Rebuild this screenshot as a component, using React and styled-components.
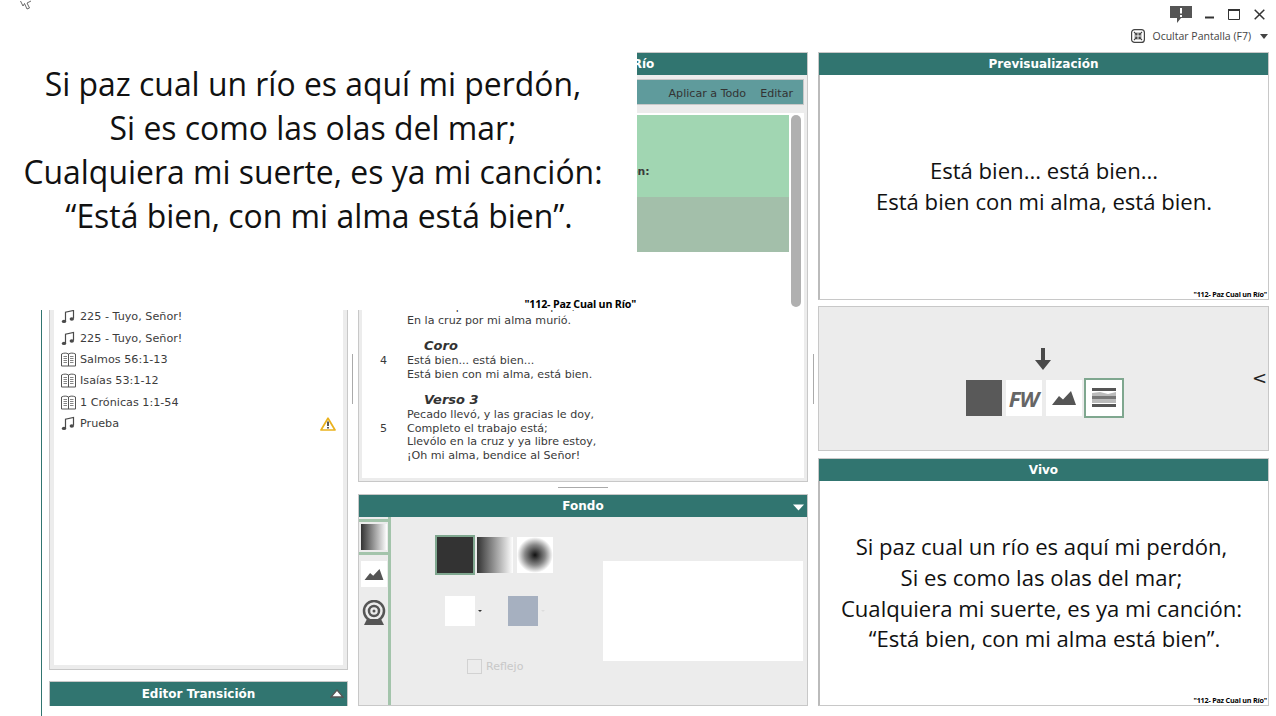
import React from 'react';
import styled, { createGlobalStyle } from 'styled-components';

const Global = createGlobalStyle`
  html, body { margin: 0; padding: 0; background: #fff; overflow: hidden; }
  * { box-sizing: border-box; }
`;
const Page = styled.div`
  position: relative; width: 1276px; height: 716px; overflow: hidden; background: #fff;
  display: flex; flex-direction: column; font-family: "DejaVu Sans", sans-serif; color: #333;
`;
const TopBar = styled.header`
  height: 52px; flex: none; display: flex; flex-direction: column; align-items: flex-end;
  padding: 6px 8px 0 0;
`;
const WindowRow = styled.div`display: flex; align-items: flex-start; height: 23px; margin-right: 3px;`;
const WindowBtn = styled.svg`display: block; margin-left: ${p => p.$gap}px; margin-top: ${p => p.$top || 0}px;`;
const ScreenRow = styled.div`display: flex; align-items: center; height: 14px;`;
const ScreenLabel = styled.span`
  font: 10.5px "Open Sans", sans-serif; color: #444; margin: 0 9px 0 7px; white-space: nowrap;
`;
const Caret = styled.span`
  width: 0; height: 0; border-left: 4.5px solid transparent; border-right: 4.5px solid transparent;
  border-top: 5px solid #444;
`;
const Main = styled.main`
  flex: 1; min-height: 0; margin-left: 41px; border-left: 1px solid #317570;
  display: flex; padding: 0 7px 10px 7px;
`;
const LeftCol = styled.section`width: 299px; flex: none; display: flex; flex-direction: column;`;
const PlayList = styled.div`
  flex: 1; border: 1px solid #c8c8c8; border-top: none; background: #fff;
  box-shadow: inset 0 0 0 4px #ececec; padding: 254px 11px 0 11px;
  margin-bottom: 11px;
`;
const Item = styled.div`
  height: 21.4px; display: flex; align-items: center; font-size: 11.2px; color: #3c3c3c; white-space: nowrap;
`;
const ItemIcon = styled.svg`flex: none; margin-right: 4px;`;
const ItemName = styled.span`flex: 1;`;
const Header = styled.div`
  position: relative; height: ${p => p.$h || 23}px; flex: none; background: #317570; color: #fff;
  display: flex; align-items: center; justify-content: center; border: 1px solid #c8c8c8; border-bottom: none;
  font-size: 12px; font-weight: 700; white-space: nowrap;
`;
const Triangle = styled.svg`position: absolute; right: ${p => p.$right}px; top: ${p => p.$top}px;`;
const Gutter = styled.div`
  width: 10px; flex: none; display: flex; align-items: flex-start; justify-content: center;
  padding: 302px ${p => p.$pr || 0}px 0 0;
`;
const GutterMark = styled.div`width: 1px; height: 50px; background: #aaa;`;
const MidCol = styled.section`width: 450px; flex: none; display: flex; flex-direction: column;`;
const SongPanel = styled.div`
  height: 407px; flex: none; display: flex; flex-direction: column; background: #ececec;
  border: 1px solid #c8c8c8; border-top: none;
`;
const Toolbar = styled.div`
  height: 26px; flex: none; margin: 4px 3px 0 3px; background: #5f9b9c; border: 1px solid #c8c8c8;
  display: flex; align-items: center; justify-content: flex-end; gap: 14px; padding: 2px 10px 0 0;
  font-size: 11.1px; color: #333;
`;
const VerseList = styled.div`
  height: 365px; margin: 8px 3px 0 3px; background: #fff; display: flex; overflow: hidden;
`;
const Verses = styled.div`width: 427px; flex: none; padding-top: 2px;`;
const Verse = styled.div`
  height: ${p => p.$h}px; background: ${p => p.$bg || 'transparent'}; padding-top: ${p => p.$pt || 4}px; overflow: hidden;
  font-size: ${p => p.$strong ? 10.9 : 11.1}px; line-height: 13.5px; color: #3a3a3a; font-weight: ${p => p.$strong ? 700 : 400};
`;
const VerseTitle = styled.div`
  height: 16px; line-height: 16px; padding-left: 62px; font-size: 13px; font-weight: 700; font-style: italic; color: #333;
`;
const VerseBody = styled.div`display: flex; align-items: center;`;
const VerseNum = styled.div`width: 45px; flex: none; padding: 0 0 13px 18px;`;
const ScrollTrack = styled.div`flex: 1; padding: 2px 2px 0 2px;`;
const ScrollThumb = styled.div`width: 10px; height: 192px; border-radius: 5px; background: #b0b0b0;`;
const SplitRow = styled.div`height: 12px; flex: none; display: flex; align-items: center; justify-content: center; padding-bottom: 2px;`;
const SplitMark = styled.div`width: 50px; height: 1px; background: #aaa;`;
const FondoPanel = styled.div`
  flex: 1; display: flex; background: #ececec; border: 1px solid #c8c8c8; border-top: none; min-height: 0;
`;
const Tabs = styled.div`
  width: 32px; flex: none; border-right: 3px solid #a3c4ab; display: flex; flex-direction: column; align-items: flex-start;
`;
const Tab = styled.div`
  width: 29px; height: ${p => p.$h}px; display: flex; align-items: center; justify-content: center;
  ${p => p.$active ? 'border-top: 3px solid #a3c4ab; border-bottom: 3px solid #a3c4ab; margin-top: 2px;' : ''}
`;
const TabThumb = styled.div`
  width: 26px; height: 26px; background: ${p => p.$bg || '#fff'}; display: flex; align-items: center; justify-content: center;
`;
const FondoLeft = styled.div`width: 212px; flex: none; display: flex; flex-direction: column; align-items: flex-start; padding: 18px 0 0 44px;`;
const Swatches = styled.div`display: flex; align-items: center; gap: 2px;`;
const Swatch = styled.div`
  width: ${p => p.$active ? 40 : 36}px; height: ${p => p.$active ? 40 : 36}px; background: ${p => p.$bg};
  ${p => p.$active ? 'border: 2px solid #7fa78f;' : ''}
  ${p => p.$last ? 'margin-left: 2px;' : ''}
`;
const Colors = styled.div`display: flex; align-items: center; margin: 21px 0 0 10px;`;
const ColorBox = styled.div`width: 30px; height: 30px; background: ${p => p.$bg};`;
const TinyCaret = styled.span`
  width: 0; height: 0; margin: 0 ${p => p.$right}px 0 3px; border-left: 2px solid transparent; border-right: 2px solid transparent;
  border-top: 2px solid ${p => p.$color};
`;
const Mirror = styled.label`display: flex; align-items: center; margin: 33px 0 0 32px; font-size: 11px; color: #c8c8c8;`;
const MirrorBox = styled.span`width: 15px; height: 15px; border: 1px solid #d2d2d2; margin-right: 4px;`;
const FondoPreview = styled.div`width: 200px; height: 100px; background: #fff; margin-top: 44px;`;
const RightCol = styled.section`width: 451px; flex: none; display: flex; flex-direction: column;`;
const SlidePanel = styled.div`
  flex: 1; min-height: 0; display: flex; border: 1px solid #c8c8c8; border-top: none; border-left-width: 2px; border-left-color: #bbb;
`;
const Slide = styled.div`
  position: relative; flex: 1; background: #fff; display: flex; flex-direction: column; align-items: center; justify-content: center;
  font-family: "Open Sans", sans-serif; font-size: ${p => p.$size}px; line-height: ${p => p.$lh}px; color: #111; text-align: center;
  white-space: pre; padding: 0 ${p => p.$pr || 0}px ${p => p.$pb || 0}px 0;
`;
const SlideLine = styled.div`padding-left: ${p => p.$indent || 0}px;`;
const SlideFoot = styled.div`
  position: absolute; right: ${p => p.$right}px; bottom: ${p => p.$bottom}px; font-family: "Open Sans", sans-serif;
  font-weight: 700; font-size: ${p => p.$size}px; line-height: 1.2; color: #000; letter-spacing: -0.2px;
`;
const Overlay = styled.div`position: absolute; left: 0; top: 0; width: 637px; height: 310px; display: flex;`;
const TransPanel = styled.div`
  height: 145px; flex: none; margin: 6px 0 7px; background: #ececec; border: 1px solid #c8c8c8;
  display: grid; grid-template-columns: 1fr auto 1fr; align-items: center;
`;
const TransCenter = styled.div`grid-column: 2; display: flex; flex-direction: column; align-items: center; padding: 8px 0 0 2px;`;
const DownArrow = styled.svg`margin-right: 3px;`;
const TransRow = styled.div`display: flex; align-items: center; gap: 4px; margin-top: 8px;`;
const Thumb = styled.div`
  width: ${p => p.$active ? 40 : 36}px; height: ${p => p.$active ? 40 : 36}px; background: ${p => p.$bg || '#fff'};
  ${p => p.$active ? 'border: 2px solid #7fa78f; margin-left: -2px;' : ''}
  display: flex; align-items: center; justify-content: center;
  font: italic 700 22px "Open Sans", sans-serif; color: #666; letter-spacing: -1px;
`;
const Chevron = styled.div`justify-self: end; font: 18px "DejaVu Sans", sans-serif; color: #222; margin: 0 1px 2px 0;`;
const Cursor = styled.svg`position: absolute; left: 20px; top: 0;`;

const Note = () => (
  <ItemIcon width="15" height="15" viewBox="0 0 15 15">
    <path d="M4.500 12V3.200L12.500 1.500V9.500" fill="none" stroke="#4a4a4a" strokeWidth="1.200" />
    <ellipse cx="3" cy="12.400" rx="2.200" ry="1.700" fill="#4a4a4a" />
    <ellipse cx="10.800" cy="10" rx="2.200" ry="1.700" fill="#4a4a4a" />
  </ItemIcon>
);
const Book = () => (
  <ItemIcon width="15" height="15" viewBox="0 0 15 15">
    <path d="M.5 2C3 .8 5.500 .8 7.500 2 9.500 .8 12 .8 14.500 2V14H.5Z M7.500 2V14" fill="#fff" stroke="#555" strokeWidth="1" />
    <path d="M2.500 4.500H6M2.500 6.500H6M2.500 8.500H6M2.500 10.500H6M9 4.500H12.500M9 6.500H12.500M9 8.500H12.500M9 10.500H12.500" stroke="#777" strokeWidth=".9" />
  </ItemIcon>
);
const Warn = () => (
  <svg width="16" height="14" viewBox="0 0 16 14">
    <path d="M8 1.200 15 13H1Z" fill="#fff" stroke="#eab21e" strokeWidth="1.700" strokeLinejoin="round" />
    <path d="M8 4.500V9M8 10V11.500" stroke="#222" strokeWidth="1.500" />
  </svg>
);
const Mountains = ({ w, h, c }) => (
  <svg width={w} height={h} viewBox="0 0 24 14">
    <path d="M0 14 7 5 11 8.500 19 0 24 14Z" fill={c} />
  </svg>
);

const Lines = ({ children }) => <div>{children}</div>;

export default function App() {
  return (
    <Page>
      <Global />
      <TopBar>
        <WindowRow>
          <WindowBtn width="22" height="17" viewBox="0 0 22 17">
            <path d="M0 0H22V12H11L7 17V12H0Z" fill="#555" />
            <path d="M10 2H12V7.500H10ZM10 9H12V11H10Z" fill="#fff" />
          </WindowBtn>
          <WindowBtn $gap="13" $top="10" width="9" height="3" viewBox="0 0 9 3"><path d="M0 1.500H9" stroke="#333" strokeWidth="2" /></WindowBtn>
          <WindowBtn $gap="14" $top="3" width="12" height="11" viewBox="0 0 12 11"><path d="M.5 1.500H11.500V10.500H.5Z" fill="none" stroke="#333" /><path d="M0 1H12" stroke="#333" strokeWidth="2" /></WindowBtn>
          <WindowBtn $gap="14" $top="3" width="11" height="11" viewBox="0 0 11 11"><path d="M.7.700 10.300 10.300M10.300.700.700 10.300" stroke="#333" strokeWidth="1.500" /></WindowBtn>
        </WindowRow>
        <ScreenRow>
          <svg width="14" height="14" viewBox="0 0 14 14">
            <rect x=".6" y=".6" width="12.800" height="12.800" rx="3" fill="none" stroke="#444" strokeWidth="1.200" />
            <path d="M3 3 6 6M6 3.500V6H3.500M11 3 8 6M8 3.500V6H10.500M3 11 6 8M6 10.500V8H3.500M11 11 8 8M8 10.500V8H10.500" fill="none" stroke="#444" strokeWidth="1.100" />
          </svg>
          <ScreenLabel>Ocultar Pantalla (F7)</ScreenLabel>
          <Caret />
        </ScreenRow>
      </TopBar>
      <Main>
        <LeftCol>
          <PlayList>
            <Item><Note /><ItemName>225 - Tuyo, Señor!</ItemName></Item>
            <Item><Note /><ItemName>225 - Tuyo, Señor!</ItemName></Item>
            <Item><Book /><ItemName>Salmos 56:1-13</ItemName></Item>
            <Item><Book /><ItemName>Isaías 53:1-12</ItemName></Item>
            <Item><Book /><ItemName>1 Crónicas 1:1-54</ItemName></Item>
            <Item><Note /><ItemName>Prueba</ItemName><Warn /></Item>
          </PlayList>
          <Header $h={25}>
            Editor Transición
            <Triangle $right={3} $top={7} width="14" height="9" viewBox="0 0 14 9"><path d="M7 1 13 8H1Z" fill="#fff" stroke="#555" strokeWidth="1.300" /></Triangle>
          </Header>
        </LeftCol>
        <Gutter $pr={2}><GutterMark /></Gutter>
        <MidCol>
          <Header>112 - Paz Cual un Río</Header>
          <SongPanel>
            <Toolbar><span>Aplicar a Todo</span><span>Editar</span></Toolbar>
            <VerseList>
              <Verses>
                <Verse $h={82} $pt={6.5} $bg="#a1d6b2" $strong>
                  <VerseTitle>Verso 1</VerseTitle>
                  <VerseBody><VerseNum>1</VerseNum><Lines>Si paz cual un río es aquí mi perdón,<br />Si es como las olas del mar;<br />Cualquiera mi suerte, es ya mi canción:<br />“Está bien, con mi alma está bien”.</Lines></VerseBody>
                </Verse>
                <Verse $h={55} $bg="#a3bfaa">
                  <VerseTitle>Coro</VerseTitle>
                  <VerseBody><VerseNum>2</VerseNum><Lines>Está bien... está bien...<br />Está bien con mi alma, está bien.</Lines></VerseBody>
                </Verse>
                <Verse $h={82} $pt={5}>
                  <VerseTitle>Verso 2</VerseTitle>
                  <VerseBody><VerseNum>3</VerseNum><Lines>Ya venza Satán, ya rujan la mar,<br />Cristo mi Dios me amó;<br />Mi triste pecado vino a expiar,<br />En la cruz por mi alma murió.</Lines></VerseBody>
                </Verse>
                <Verse $h={54}>
                  <VerseTitle>Coro</VerseTitle>
                  <VerseBody><VerseNum>4</VerseNum><Lines>Está bien... está bien...<br />Está bien con mi alma, está bien.</Lines></VerseBody>
                </Verse>
                <Verse $h={82}>
                  <VerseTitle>Verso 3</VerseTitle>
                  <VerseBody><VerseNum>5</VerseNum><Lines>Pecado llevó, y las gracias le doy,<br />Completo el trabajo está;<br />Llevólo en la cruz y ya libre estoy,<br />¡Oh mi alma, bendice al Señor!</Lines></VerseBody>
                </Verse>
              </Verses>
              <ScrollTrack><ScrollThumb /></ScrollTrack>
            </VerseList>
          </SongPanel>
          <SplitRow><SplitMark /></SplitRow>
          <Header>
            Fondo
            <Triangle $right={2} $top={9} width="13" height="7" viewBox="0 0 13 7"><path d="M1 .5H12L6.500 6.500Z" fill="#fff" /></Triangle>
          </Header>
          <FondoPanel>
            <Tabs>
              <Tab $active $h={36}><TabThumb $bg="linear-gradient(90deg,#333,#fff)" /></Tab>
              <Tab $h={38}><TabThumb><Mountains w={20} h={11} c="#555" /></TabThumb></Tab>
              <Tab $h={40}>
                <svg width="26" height="26" viewBox="0 0 26 26">
                  <circle cx="13" cy="11" r="10" fill="none" stroke="#555" strokeWidth="2.500" />
                  <circle cx="13" cy="11" r="5" fill="none" stroke="#555" strokeWidth="2.500" />
                  <circle cx="13" cy="11" r="1.500" fill="#555" />
                  <path d="M6 19 3 25H23L20 19Z" fill="#555" />
                </svg>
              </Tab>
            </Tabs>
            <FondoLeft>
              <Swatches>
                <Swatch $active $bg="#333" />
                <Swatch $bg="linear-gradient(90deg,#333,#fff)" />
                <Swatch $last $bg="radial-gradient(circle,#111 0,#888 40%,#fff 70%)" />
              </Swatches>
              <Colors>
                <ColorBox $bg="#fff" />
                <TinyCaret $color="#333" $right={26} />
                <ColorBox $bg="#a6b0c0" />
                <TinyCaret $color="#ddd" $right={0} />
              </Colors>
              <Mirror><MirrorBox />Reflejo</Mirror>
            </FondoLeft>
            <FondoPreview />
          </FondoPanel>
        </MidCol>
        <Gutter><GutterMark /></Gutter>
        <RightCol>
          <Header>Previsualización</Header>
          <SlidePanel>
            <Slide $size={22.1} $lh={30.5} $pb={3}>
              <SlideLine>Está bien... está bien...</SlideLine>
              <SlideLine>Está bien con mi alma, está bien.</SlideLine>
              <SlideFoot $size={7.2} $right={1} $bottom={0}>"112- Paz Cual un Río"</SlideFoot>
            </Slide>
          </SlidePanel>
          <TransPanel>
            <TransCenter>
              <DownArrow width="18" height="22" viewBox="0 0 18 22"><path d="M7 0H11V12H17L9 22 1 12H7Z" fill="#4a4a4a" /></DownArrow>
              <TransRow>
                <Thumb $bg="#595959" />
                <Thumb>FW</Thumb>
                <Thumb><Mountains w={26} h={14} c="#555" /></Thumb>
                <Thumb $active>
                  <svg width="24" height="20" viewBox="0 0 24 20">
                    <path d="M0 5 8 4 16 6 24 4V15H0Z" fill="#bbb" />
                    <path d="M0 0H24V3H0ZM0 16H24V19H0Z" fill="#555" />
                    <path d="M0 8H24V11H0Z" fill="#777" />
                  </svg>
                </Thumb>
              </TransRow>
            </TransCenter>
            <Chevron>&lt;</Chevron>
          </TransPanel>
          <Header>Vivo</Header>
          <SlidePanel>
            <Slide $size={22.1} $lh={30.9} $pr={5} $pb={1}>
              <SlideLine>Si paz cual un río es aquí mi perdón,</SlideLine>
              <SlideLine>Si es como las olas del mar;</SlideLine>
              <SlideLine>Cualquiera mi suerte, es ya mi canción:</SlideLine>
              <SlideLine $indent={6}>“Está bien, con mi alma está bien”.</SlideLine>
              <SlideFoot $size={7.2} $right={1} $bottom={0}>"112- Paz Cual un Río"</SlideFoot>
            </Slide>
          </SlidePanel>
        </RightCol>
      </Main>
      <Overlay>
        <Slide $size={31.9} $lh={44.2} $pb={10} $pr={11}>
          <SlideLine>Si paz cual un río es aquí mi perdón,</SlideLine>
          <SlideLine>Si es como las olas del mar;</SlideLine>
          <SlideLine>Cualquiera mi suerte, es ya mi canción:</SlideLine>
          <SlideLine $indent={12}>“Está bien, con mi alma está bien”.</SlideLine>
          <SlideFoot $size={10.7} $right={1} $bottom={-1}>"112- Paz Cual un Río"</SlideFoot>
        </Slide>
      </Overlay>
      <Cursor width="12" height="10" viewBox="0 0 12 10">
        <path d="M.5 1 3 6 4.500 3.500 7 9 9.500 8 7 3 11 1" fill="#fff" stroke="#444" strokeWidth=".8" />
      </Cursor>
    </Page>
  );
}
